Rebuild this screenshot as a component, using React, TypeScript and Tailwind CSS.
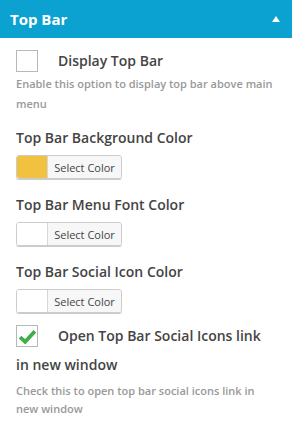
const font = { fontFamily: '"Open Sans", "Noto Sans", sans-serif' };

function Checkbox({ checked }: { checked?: boolean }) {
  return (
    <span className="shrink-0 w-[22px] h-[22px] border border-[#b4b9be] bg-white flex items-center justify-center">
      {checked && (
        <svg width="19" height="17" viewBox="0 0 18 16">
          <path d="M2 8.5 L6.8 13 L16 3" fill="none" stroke="#3fae49" strokeWidth="3.6" />
        </svg>
      )}
    </span>
  );
}

function ColorPicker({ color }: { color?: string }) {
  return (
    <div className="flex w-[106px] h-[24px] rounded-[3px] border border-[#cccccc] overflow-hidden shadow-[0_1px_0_#ccc]">
      <span className={`w-[31px] h-full border-r border-[#d6d6d6] ${color ?? "bg-white"}`} />
      <span className="flex-1 bg-[#f7f7f7] text-[11px] text-[#444] flex items-center justify-center leading-none">
        Select Color
      </span>
    </div>
  );
}

function Label({ children }: { children: React.ReactNode }) {
  return <p className="text-[14px] font-semibold text-[#444] leading-[20px]">{children}</p>;
}

export default function App() {
  return (
    <div className="w-[292px] h-[421px] bg-white overflow-hidden" style={font}>
      <div className="h-[38px] bg-[#0ba1d0] flex items-center justify-between pl-[10px] pr-[12px]">
        <span className="text-white font-bold text-[15px]">Top Bar</span>
        <span className="w-0 h-0 border-l-[4px] border-r-[4px] border-b-[6px] border-l-transparent border-r-transparent border-b-white" />
      </div>

      <div className="px-[16px]">
        <div className="flex items-center gap-[20px] mt-[12px]">
          <Checkbox />
          <Label>Display Top Bar</Label>
        </div>
        <p className="text-[11px] font-semibold text-[#999] leading-[20px] mt-[2px]">
          Enable this option to display top bar above main menu
        </p>

        <div className="mt-[14px]">
          <Label>Top Bar Background Color</Label>
          <div className="mt-[7px]">
            <ColorPicker color="bg-[#f0c240]" />
          </div>
        </div>

        <div className="mt-[16px]">
          <Label>Top Bar Menu Font Color</Label>
          <div className="mt-[7px]">
            <ColorPicker />
          </div>
        </div>

        <div className="mt-[16px]">
          <Label>Top Bar Social Icon Color</Label>
          <div className="mt-[7px]">
            <ColorPicker />
          </div>
        </div>

        <div className="mt-[12px]">
          <div className="flex items-center gap-[20px]">
            <Checkbox checked />
            <Label>Open Top Bar Social Icons link</Label>
          </div>
          <p className="text-[14px] font-semibold text-[#444] leading-[20px] mt-[8px]">in new window</p>
        </div>
        <p className="text-[11px] font-semibold text-[#999] leading-[18px] mt-[7px]">
          Check this to open top bar social icons link in new window
        </p>
      </div>
    </div>
  );
}
